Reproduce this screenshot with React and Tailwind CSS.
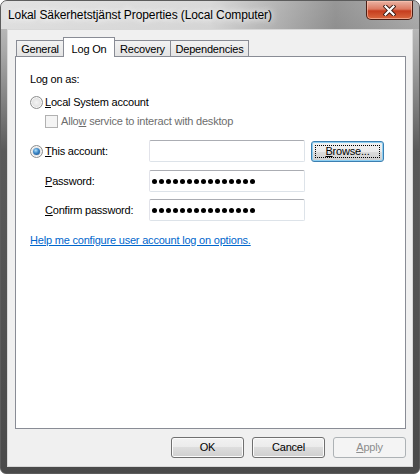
import React from "react";

const FONT = { fontFamily: '"Liberation Sans", Arial, sans-serif' };

function Radio({ checked }) {
  return (
    <span className="flex h-[13px] w-[13px] shrink-0 items-center justify-center rounded-full border border-[#8e8f8f] bg-[radial-gradient(circle_at_50%_50%,#f4f4f4_0%,#e6e6e6_45%,#cfcfcf_100%)] shadow-[inset_0_0_0_1px_#f8f8f8]">
      {checked && (
        <span className="h-[7px] w-[7px] rounded-full bg-[radial-gradient(circle_at_40%_35%,#aee0fb_0%,#3c86c6_45%,#174a82_100%)]" />
      )}
    </span>
  );
}

function Dots() {
  return (
    <div className="flex h-[22px] w-[156px] items-center gap-[2px] rounded-[2px] border border-[#dde3e9] border-t-[#abadb3] border-l-[#e2e3ea] bg-white pl-[2px]">
      {Array.from({ length: 15 }).map((_, i) => (
        <span key={i} className="h-[5px] w-[5px] rounded-full bg-black" />
      ))}
    </div>
  );
}

function Btn({ children, disabled, focused }) {
  return (
    <div
      className={
        "relative flex h-[21px] w-[73px] items-center justify-center rounded-[3px] border " +
        (disabled
          ? "border-[#adb2b5] bg-[#f4f4f4] text-[#8d8d8d]"
          : focused
          ? "border-[#3c7fb1] bg-[linear-gradient(to_bottom,#f2f2f2_0%,#ebebeb_50%,#dddddd_50%,#cfcfcf_100%)] text-black shadow-[inset_0_0_0_1px_#8ed0f3]"
          : "border-[#707070] bg-[linear-gradient(to_bottom,#f2f2f2_0%,#ebebeb_50%,#dddddd_50%,#cfcfcf_100%)] text-black shadow-[inset_0_0_0_1px_#fbfbfb]")
      }
    >
      {focused && <span className="absolute inset-[3px] border border-dotted border-black" />}
      <span className="relative leading-none">{children}</span>
    </div>
  );
}

export default function App() {
  return (
    <div
      style={FONT}
      className="flex h-[474px] w-[420px] flex-col overflow-hidden rounded-t-[7px] rounded-b-[6px] border border-[#5c5c5c] bg-[linear-gradient(to_bottom,#c9c9c9_0px,#a9a9a9_50px,#5a5a5a_150px,#4a4a4a_100%)] text-[11px] tracking-[-0.2px] text-black"
    >
      {/* Title bar */}
      <div className="flex h-[28px] shrink-0 items-start bg-[linear-gradient(to_right,rgba(235,235,235,0.75)_0%,rgba(225,225,225,0.7)_50%,rgba(110,110,110,0.55)_80%,rgba(140,140,140,0.4)_100%)]">
        <div className="mt-[7px] pl-[7px] text-[12px] leading-[15px] tracking-[-0.1px] text-black [text-shadow:0_0_6px_#fff,0_0_10px_#fff]">
          Lokal Säkerhetstjänst Properties (Local Computer)
        </div>
        <div className="ml-auto mr-[6px] flex h-[19px] w-[47px] items-center justify-center rounded-b-[5px] border border-t-0 border-[#4b1e14] bg-[linear-gradient(to_bottom,#eab3a4_0%,#dc7a62_45%,#c63d1e_55%,#d9683f_100%)] shadow-[inset_0_0_0_1px_rgba(255,200,180,0.6)]">
          <svg width="13" height="11" viewBox="0 0 13 11">
            <path d="M2.5 1.5 L10.5 9.5 M10.5 1.5 L2.5 9.5" stroke="#3a1a12" strokeWidth="4" strokeLinecap="square" />
            <path d="M2.5 1.5 L10.5 9.5 M10.5 1.5 L2.5 9.5" stroke="#ffffff" strokeWidth="2.2" strokeLinecap="square" />
          </svg>
        </div>
      </div>

      {/* Body */}
      <div className="flex flex-1 flex-col px-[6px] pb-[6px]">
        <div className="flex flex-1 flex-col border border-[#d8d8d8] bg-[#f0f0f0] pl-[7px] pr-[6px] pt-[7px]">
          {/* Tabs */}
          <div className="flex h-[20px] items-end pl-[1px]">
            <div className="flex h-[17px] w-[48px] items-center justify-center border border-b-0 border-[#898c95] bg-[linear-gradient(to_bottom,#f2f2f2,#e3e3e3)] pt-[1px]">
              General
            </div>
            <div className="relative z-10 -ml-px flex h-[20px] w-[52px] items-start justify-center border border-b-0 border-[#898c95] bg-white pt-[3px]">
              Log On
            </div>
            <div className="-ml-px flex h-[17px] w-[57px] items-center justify-center border border-b-0 border-[#898c95] bg-[linear-gradient(to_bottom,#f2f2f2,#e3e3e3)] pt-[1px]">
              Recovery
            </div>
            <div className="-ml-px flex h-[17px] w-[79px] items-center justify-center border border-b-0 border-[#898c95] bg-[linear-gradient(to_bottom,#f2f2f2,#e3e3e3)] pt-[1px]">
              Dependencies
            </div>
          </div>

          {/* Panel */}
          <div className="-mt-px flex flex-1 flex-col border border-[#898c95] bg-white pl-[14px] pt-[14px]">
            <div className="flex h-[16px] items-center">Log on as:</div>

            <div className="mt-[7px] flex h-[16px] items-center gap-[2px]">
              <Radio />
              <span>
                <span className="underline">L</span>ocal System account
              </span>
            </div>

            <div className="mt-[3px] flex h-[16px] items-center gap-[3px] pl-[15px]">
              <span className="h-[13px] w-[13px] border border-[#b1b1b1] bg-[#f4f4f4]" />
              <span className="text-[#6d6d6d]">
                Allo<span className="underline">w</span> service to interact with desktop
              </span>
            </div>

            <div className="mt-[11px] flex h-[22px] items-center">
              <div className="flex w-[119px] items-center gap-[2px]">
                <Radio checked />
                <span>
                  <span className="underline">T</span>his account:
                </span>
              </div>
              <div className="h-[22px] w-[156px] rounded-[2px] border border-[#dde3e9] border-t-[#abadb3] border-l-[#e2e3ea] bg-white" />
              <div className="ml-[6px] mt-[1px]">
                <Btn focused>
                  <span className="underline">B</span>rowse...
                </Btn>
              </div>
            </div>

            <div className="mt-[8px] flex h-[22px] items-center">
              <div className="w-[119px] pl-[15px]">
                <span className="underline">P</span>assword:
              </div>
              <Dots />
            </div>

            <div className="mt-[7px] flex h-[22px] items-center">
              <div className="w-[119px] pl-[15px]">
                <span className="underline">C</span>onfirm password:
              </div>
              <Dots />
            </div>

            <div className="mt-[11px] flex h-[16px] items-center">
              <span className="text-[#0066cc] underline">Help me configure user account log on options.</span>
            </div>
          </div>

          {/* Buttons */}
          <div className="my-[8px] flex justify-end gap-[8px]">
            <Btn>OK</Btn>
            <Btn>Cancel</Btn>
            <Btn disabled>
              <span className="underline">A</span>pply
            </Btn>
          </div>
        </div>
      </div>
    </div>
  );
}
